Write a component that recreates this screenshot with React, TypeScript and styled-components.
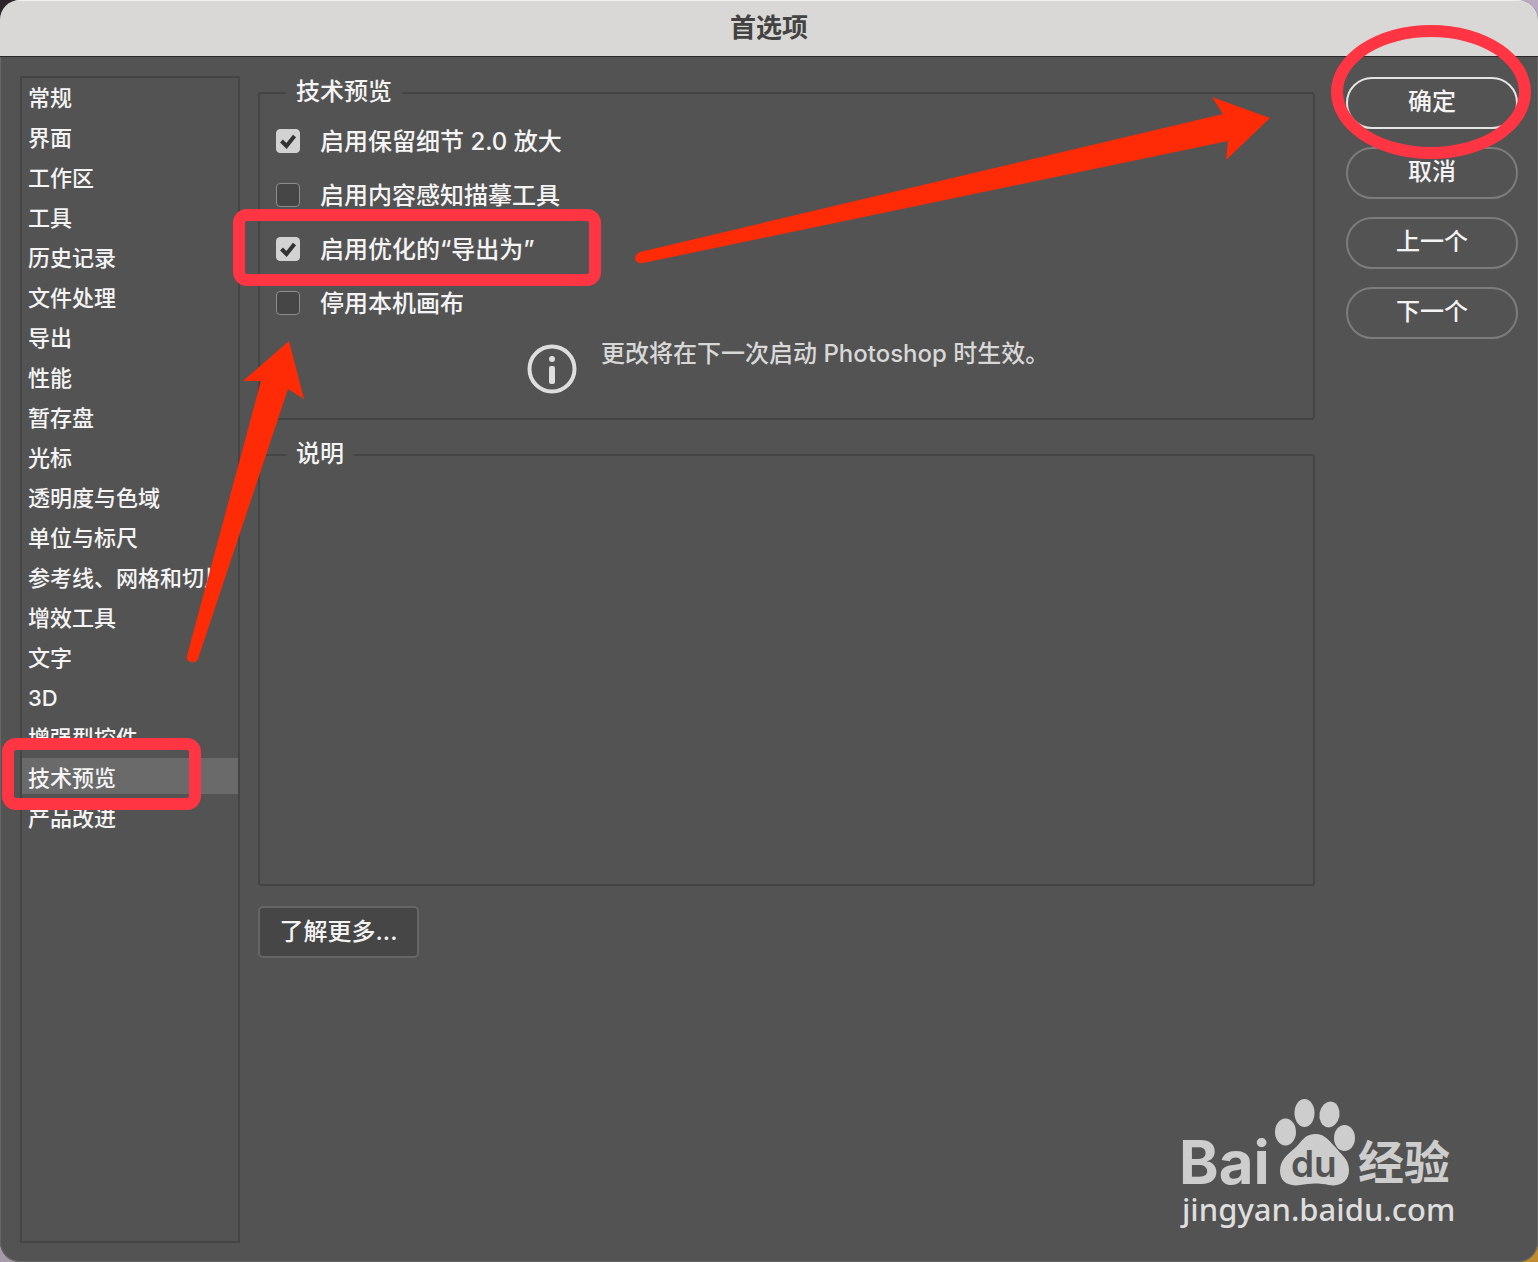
import React, { useState } from "react";
import styled, { createGlobalStyle } from "styled-components";

const color = {
  panel: "#535353",
  line: "#444444",
  text: "#f4f4f4",
  ring: "#ff3543",
  arrow: "#ff2a06",
  mark: "#cdcdcd",
};

const GlobalStyle = createGlobalStyle`
  * { box-sizing: border-box; }
  body {
    margin: 0;
    background:
      linear-gradient(#2c2429, #2c2429) left top / 40px 40px no-repeat,
      linear-gradient(#bba9c4, #bba9c4) right top / 40px 40px no-repeat,
      linear-gradient(#c08a2e, #c08a2e) right bottom / 40px 40px no-repeat,
      #a79aab;
    font-family: Inter, "Noto Sans CJK SC", sans-serif;
    font-weight: 500;
    color: ${color.text};
  }
  button, input { font: inherit; color: inherit; }
`;

const Window = styled.div`
  position: relative;
  display: flex;
  flex-direction: column;
  min-height: 100vh;
  border-radius: 20px;
  overflow: hidden;
  background: ${color.panel};
  box-shadow: inset 0 0 0 1px #666666;
`;

const TitleBar = styled.header`
  display: flex;
  justify-content: center;
  height: 57px;
  border-top: 1px solid #f0efee;
  border-bottom: 1px solid #2b2729;
  background: #d9d8d6;
`;

const Title = styled.h1`
  margin: 0;
  font-size: 26px;
  line-height: 54px;
  font-weight: 700;
  color: #434343;
`;

const Body = styled.div`
  display: flex;
  flex: 1;
  padding: 19px 20px;
`;

const Sidebar = styled.nav`
  width: 220px;
  flex: none;
  margin-right: 18px;
  border: 2px solid ${color.line};
`;

const CategoryList = styled.ul`
  display: flex;
  flex-direction: column;
  gap: 4px;
  margin: 0;
  padding: 0;
  list-style: none;
`;

const CategoryItem = styled.li`
  position: relative;
`;

const CategoryButton = styled.button<{ $active: boolean }>`
  display: block;
  width: 100%;
  height: 36px;
  padding: 4px 6px 0;
  border: 0;
  background: ${(p) => (p.$active ? "#6a6a6a" : "transparent")};
  font-size: 22px;
  line-height: 32px;
  text-align: left;
  white-space: nowrap;
`;

const Main = styled.main`
  display: flex;
  flex: 1;
  flex-direction: column;
  align-items: stretch;
  gap: 18px;
  min-width: 0;
`;

const Group = styled.fieldset`
  margin: 0;
  padding: 4px 16px 24px;
  border: 2px solid ${color.line};
  border-radius: 3px;
  min-width: 0;
`;

const Description = styled(Group)`
  height: 448px;
`;

const GroupTitle = styled.legend`
  margin-left: 10px;
  padding: 0 10px 2px;
  font-size: 24px;
  line-height: 32px;
`;

const Option = styled.div`
  position: relative;
  display: flex;
  align-items: center;
  gap: 20px;
  height: 54px;
`;

const OptionLabel = styled.label`
  padding-top: 2px;
  font-size: 24px;
  line-height: 32px;
`;

const CheckFrame = styled.span`
  display: grid;
  width: 24px;
  height: 24px;
  > * { grid-area: 1 / 1; }
`;

const CheckInput = styled.input`
  appearance: none;
  width: 24px;
  height: 24px;
  margin: 0;
  border: 1px solid #8c8c8c;
  border-radius: 4px;
  background: #464646;
  &:checked {
    border-color: #d2d2d2;
    background: #d2d2d2;
  }
  &:not(:checked) + svg { display: none; }
`;

const CheckMark = styled.svg`
  width: 24px;
  height: 24px;
  pointer-events: none;
`;

const Notice = styled.div`
  display: flex;
  justify-content: flex-start;
  gap: 24px;
  padding: 8px 0 0 251px;
`;

const NoticeIcon = styled.svg`
  flex: none;
  width: 50px;
  height: 50px;
  margin-top: 6px;
`;

const NoticeText = styled.p`
  margin: 0;
  font-size: 24px;
  line-height: 32px;
  color: #d8d8d8;
`;

const MoreButton = styled.button`
  align-self: flex-start;
  min-width: 161px;
  height: 52px;
  margin-top: 2px;
  padding: 0 18px;
  border: 2px solid #666666;
  border-radius: 5px;
  background: #464646;
  font-size: 24px;
  line-height: 32px;
`;

const Actions = styled.div`
  display: flex;
  flex: none;
  flex-direction: column;
  gap: 18px;
  width: 172px;
  margin-left: 31px;
  padding-top: 1px;
`;

const ActionSlot = styled.div`
  position: relative;
`;

const ActionButton = styled.button<{ $primary?: boolean }>`
  display: block;
  width: 100%;
  height: 52px;
  padding: 0 0 2px;
  border: 2px solid ${(p) => (p.$primary ? "#e4e4e4" : "#7c7c7c")};
  border-radius: 26px;
  background: transparent;
  font-size: 24px;
  line-height: 32px;
`;

/* Hand-drawn style markers lying over the dialog */
const Ring = styled.span`
  position: absolute;
  z-index: 1;
  border: 12px solid ${color.ring};
  border-radius: 14px;
  pointer-events: none;
`;

const CategoryRing = styled(Ring)`
  inset: -20px auto auto -20px;
  width: 199px;
  height: 72px;
`;

const OptionRing = styled(Ring)`
  inset: -13px auto auto -43px;
  width: 368px;
  height: 77px;
`;

const ActionRing = styled(Ring)`
  inset: -52px auto auto -15px;
  width: 200px;
  height: 134px;
  border-radius: 50%;
`;

const Arrows = styled.svg`
  position: absolute;
  z-index: 2;
  top: 0;
  left: 0;
  pointer-events: none;
`;

const Watermark = styled.svg`
  position: absolute;
  right: 78px;
  bottom: 30px;
  pointer-events: none;
`;

const categories = [
  "常规", "界面", "工作区", "工具", "历史记录", "文件处理", "导出", "性能",
  "暂存盘", "光标", "透明度与色域", "单位与标尺", "参考线、网格和切片",
  "增效工具", "文字", "3D", "增强型控件", "技术预览", "产品改进",
];

const options = [
  { id: "details", label: "启用保留细节 2.0 放大", on: true },
  { id: "trace", label: "启用内容感知描摹工具", on: false },
  { id: "export", label: "启用优化的“导出为”", on: true, marked: true },
  { id: "canvas", label: "停用本机画布", on: false },
];

function CheckOption({ id, label, on, marked }: { id: string; label: string; on: boolean; marked?: boolean }) {
  return (
    <Option>
      <CheckFrame>
        <CheckInput type="checkbox" id={id} defaultChecked={on} />
        <CheckMark viewBox="0 0 24 24" aria-hidden="true">
          <path d="M5.5 12L10.5 17L18.5 7" fill="none" stroke="#333333" strokeWidth="4" />
        </CheckMark>
      </CheckFrame>
      <OptionLabel htmlFor={id}>{label}</OptionLabel>
      {marked && <OptionRing aria-hidden="true" />}
    </Option>
  );
}

function BaiduMark() {
  return (
    <Watermark width="282" height="136" viewBox="1178 1096 282 136" fill={color.mark}>
      <ellipse cx="1285.5" cy="1132" rx="10.5" ry="13.5" />
      <ellipse cx="1304.5" cy="1113" rx="10" ry="14" />
      <ellipse cx="1329.5" cy="1114.5" rx="10" ry="13" transform="rotate(10 1329.5 1114.5)" />
      <ellipse cx="1344.5" cy="1138" rx="10.5" ry="13" />
      <path d="M1315 1134C1304 1134 1301 1143 1295 1148C1287 1155 1280 1160 1280 1171C1280 1181 1288 1187 1300 1185C1310 1183 1320 1183 1329 1185C1341 1187 1349 1181 1349 1170C1349 1160 1342 1155 1337 1149C1330 1142 1326 1134 1315 1134Z" />
      <text x="1179" y="1184" fontFamily="Inter, sans-serif" fontWeight="700" fontSize="60">Bai</text>
      <text x="1291" y="1177" fontFamily="Inter, sans-serif" fontWeight="600" fontSize="37" fill={color.panel}>du</text>
      <text x="1358" y="1179" fontFamily="Noto Sans CJK SC, sans-serif" fontWeight="700" fontSize="46">经验</text>
      <text x="1182" y="1221" fontFamily="Noto Sans, sans-serif" fontWeight="500" fontSize="31" fill="#dedede">jingyan.baidu.com</text>
    </Watermark>
  );
}

export default function App() {
  const [active, setActive] = useState("技术预览");
  return (
    <>
      <GlobalStyle />
      <Window>
        <TitleBar>
          <Title>首选项</Title>
        </TitleBar>
        <Body>
          <Sidebar>
            <CategoryList>
              {categories.map((name) => (
                <CategoryItem key={name}>
                  <CategoryButton $active={name === active} onClick={() => setActive(name)}>
                    {name}
                  </CategoryButton>
                  {name === "技术预览" && <CategoryRing aria-hidden="true" />}
                </CategoryItem>
              ))}
            </CategoryList>
          </Sidebar>
          <Main>
            <Group>
              <GroupTitle>技术预览</GroupTitle>
              {options.map((o) => (
                <CheckOption key={o.id} {...o} />
              ))}
              <Notice>
                <NoticeIcon viewBox="0 0 50 50" aria-hidden="true">
                  <circle cx="25" cy="25" r="22.5" fill="none" stroke="#dedede" strokeWidth="4" />
                  <circle cx="25" cy="15" r="3" fill="#dedede" />
                  <rect x="22" y="22" width="6" height="18" rx="2" fill="#dedede" />
                </NoticeIcon>
                <NoticeText>更改将在下一次启动 Photoshop 时生效。</NoticeText>
              </Notice>
            </Group>
            <Description>
              <GroupTitle>说明</GroupTitle>
            </Description>
            <MoreButton>了解更多...</MoreButton>
          </Main>
          <Actions>
            <ActionSlot>
              <ActionButton $primary>确定</ActionButton>
              <ActionRing aria-hidden="true" />
            </ActionSlot>
            <ActionButton>取消</ActionButton>
            <ActionButton>上一个</ActionButton>
            <ActionButton>下一个</ActionButton>
          </Actions>
        </Body>
        <Arrows width="1538" height="1262" viewBox="0 0 1538 1262" fill={color.arrow} aria-hidden="true">
          <path d="M187 656L261 381L243 381L289 341L304 399L288 389L198 659Q196 663 191 662Q186 661 187 656Z" />
          <path d="M640 252L1223 114L1212 97L1270 118L1226 160L1228 141L643 263Q637 264 635 259Q635 254 640 252Z" />
        </Arrows>
        <BaiduMark />
      </Window>
    </>
  );
}
